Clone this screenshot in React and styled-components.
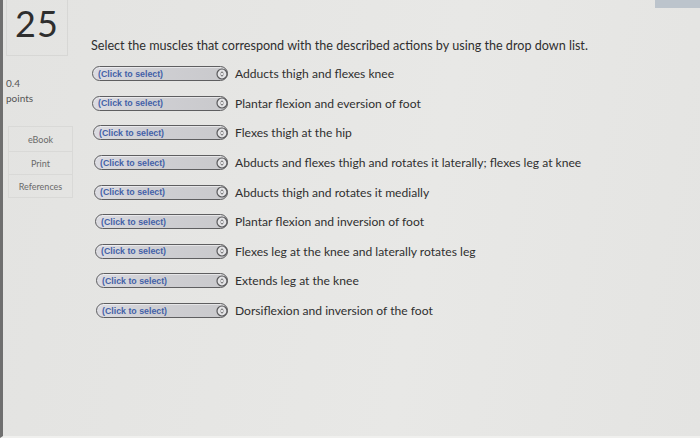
import styled, { createGlobalStyle } from "styled-components";

const GlobalStyle = createGlobalStyle`
  html, body {
    margin: 0;
    padding: 0;
    background: #e5e5e3;
  }
  body {
    font-family: Lato, "Open Sans", "Liberation Sans", sans-serif;
  }
`;

const Page = styled.div`
  width: 700px;
  height: 438px;
  box-sizing: border-box;
  display: flex;
  background: linear-gradient(100deg, #e3e3e1 0%, #e8e8e6 60%, #e4e4e2 100%);
  border-left: 3px solid #6f6f6f;
  border-bottom: 2px solid #f0f0ee;
  overflow: hidden;
`;

const Sidebar = styled.div`
  width: 77px;
  flex-shrink: 0;
  padding-left: 3px;
  display: flex;
  flex-direction: column;
`;

const NumberBox = styled.div`
  width: 62px;
  height: 56px;
  box-sizing: border-box;
  border: 1px solid #d7d7d5;
  border-top: none;
  display: flex;
  justify-content: center;
  padding-top: 1px;
  font-size: 36px;
  color: #2e2e2e;
  letter-spacing: 1px;
`;

const Points = styled.div`
  margin-top: 20px;
  font-size: 10px;
  line-height: 15px;
  color: #555;
`;

const LinkBox = styled.div`
  margin-top: 20px;
  margin-left: 2px;
  width: 63px;
  border: 1px solid #d9d9d7;
  display: flex;
  flex-direction: column;
`;

const LinkItem = styled.div`
  height: ${(p) => p.h}px;
  display: flex;
  align-items: center;
  justify-content: center;
  font-size: 9px;
  color: #6a6a6a;
  border-top: ${(p) => (p.first ? "none" : "1px solid #d9d9d7")};
`;

const Main = styled.div`
  flex: 1;
  display: flex;
  flex-direction: column;
`;

const Corner = styled.div`
  align-self: flex-end;
  width: 45px;
  height: 8px;
  background: #bcc4cc;
`;

const Instruction = styled.div`
  margin-top: 30px;
  margin-left: 8px;
  font-size: 12.6px;
  color: #2f2f2f;
`;

const List = styled.div`
  margin-top: 6px;
  display: flex;
  flex-direction: column;
`;

const Row = styled.div`
  height: 29.6px;
  display: flex;
  align-items: center;
`;

const Select = styled.div`
  margin-left: ${(p) => 9 + p.shift}px;
  width: ${(p) => 136 - p.shift}px;
  height: 15px;
  box-sizing: border-box;
  border: 1.5px solid #5e5e60;
  border-radius: 8px;
  background: linear-gradient(90deg, #dcdce2 0%, #cfcfd3 40%, #c9c9cc 100%);
  display: flex;
  align-items: center;
  justify-content: space-between;
  padding: 0 0 0 5px;
  box-shadow: inset 0 1px 0 rgba(255, 255, 255, 0.5);
`;

const SelectText = styled.span`
  font-family: "Liberation Sans", Arial, sans-serif;
  font-weight: bold;
  font-size: 8.8px;
  color: #4461a8;
`;

const Spinner = styled.svg`
  width: 12px;
  height: 12px;
  margin-right: -1px;
  flex-shrink: 0;
`;

const Desc = styled.span`
  margin-left: 7px;
  font-size: 12.1px;
  color: #2f2f2f;
`;

const rows = [
  ["Adducts thigh and flexes knee", 0],
  ["Plantar flexion and eversion of foot", 0],
  ["Flexes thigh at the hip", 1],
  ["Abducts and flexes thigh and rotates it laterally; flexes leg at knee", 2],
  ["Abducts thigh and rotates it medially", 2],
  ["Plantar flexion and inversion of foot", 3],
  ["Flexes leg at the knee and laterally rotates leg", 3],
  ["Extends leg at the knee", 4],
  ["Dorsiflexion and inversion of the foot", 4],
];

const SpinIcon = () => (
  <Spinner viewBox="0 0 12 12">
    <circle cx="6" cy="6" r="5" fill="#e4e4e6" stroke="#5a5a5c" strokeWidth="1.2" />
    <path d="M4.5 5.2 L6 3.8 L7.5 5.2 M4.5 6.8 L6 8.2 L7.5 6.8" fill="none" stroke="#555" strokeWidth="0.9" />
  </Spinner>
);

export default function App() {
  return (
    <>
      <GlobalStyle />
      <Page>
        <Sidebar>
          <NumberBox>25</NumberBox>
          <Points>
            0.4
            <br />
            points
          </Points>
          <LinkBox>
            <LinkItem first h={24}>eBook</LinkItem>
            <LinkItem h={22}>Print</LinkItem>
            <LinkItem h={22}>References</LinkItem>
          </LinkBox>
        </Sidebar>
        <Main>
          <Corner />
          <Instruction>
            Select the muscles that correspond with the described actions by using the drop down list.
          </Instruction>
          <List>
            {rows.map(([text, shift]) => (
              <Row key={text}>
                <Select shift={shift}>
                  <SelectText>(Click to select)</SelectText>
                  <SpinIcon />
                </Select>
                <Desc>{text}</Desc>
              </Row>
            ))}
          </List>
        </Main>
      </Page>
    </>
  );
}
